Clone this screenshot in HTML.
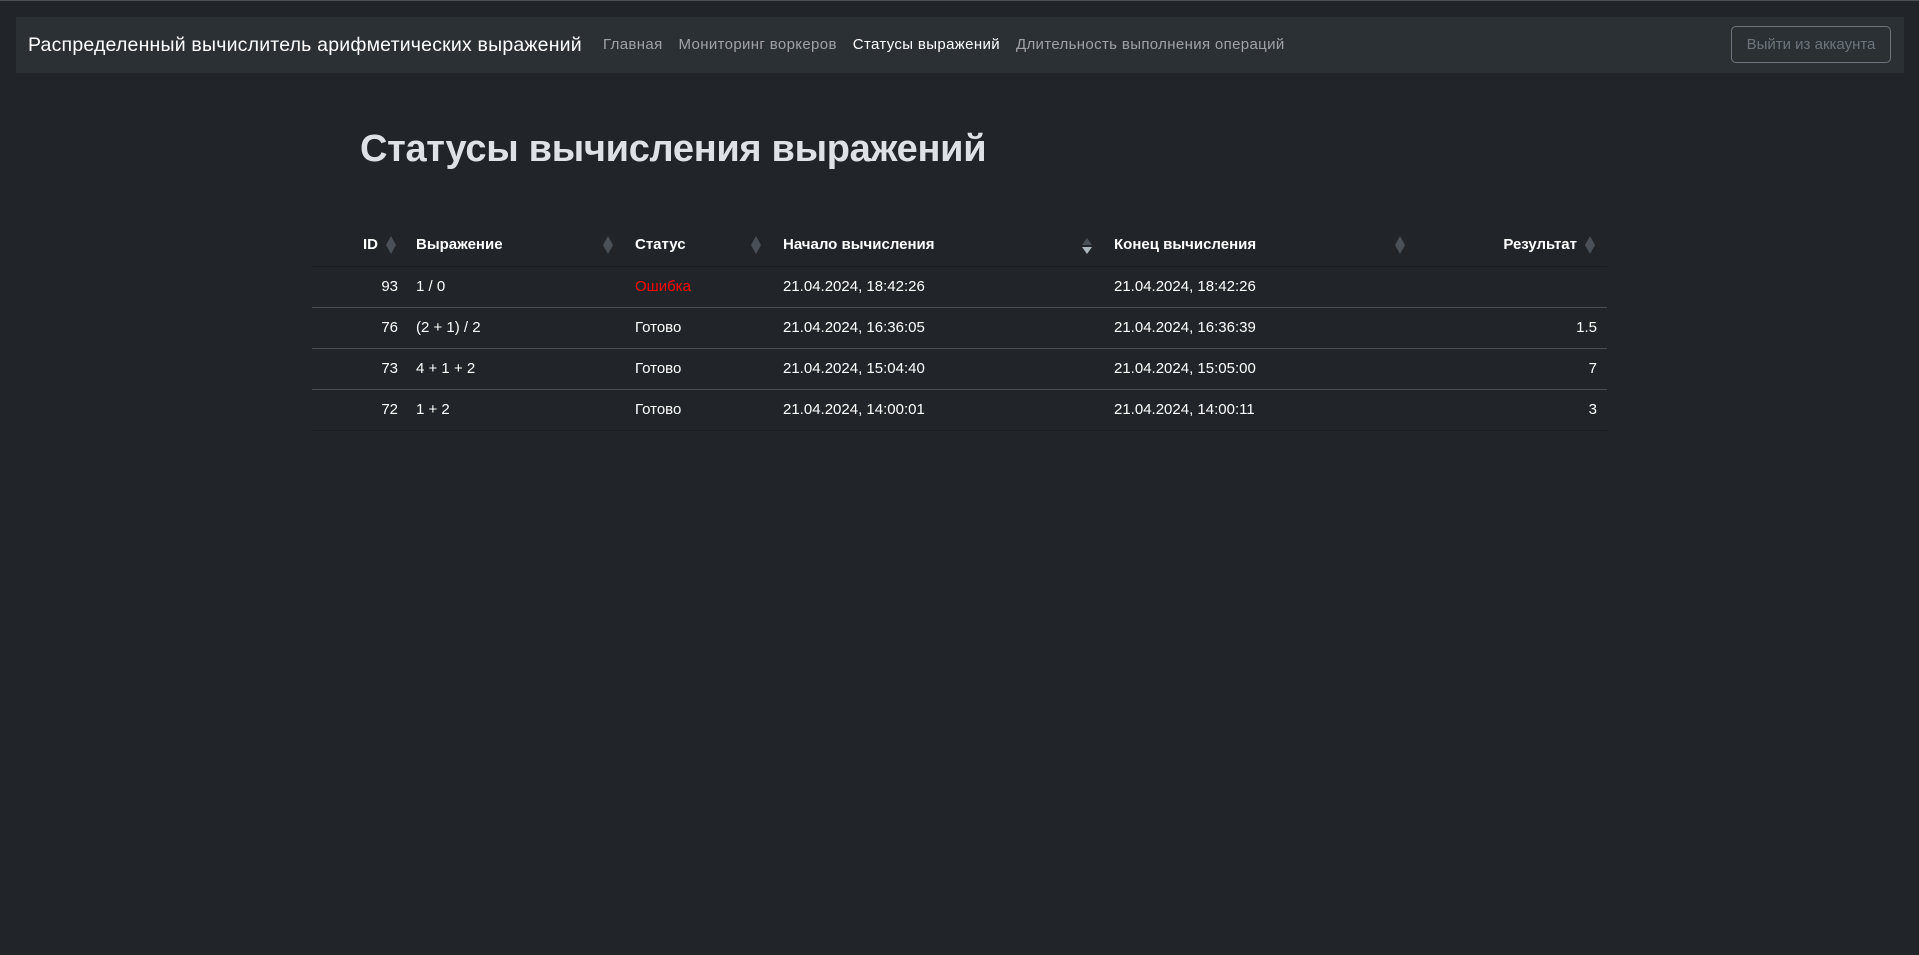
<!DOCTYPE html>
<html><head><meta charset="utf-8"><style>
*{box-sizing:border-box;margin:0;padding:0}
html,body{width:1919px;height:955px;background:#212529;color:#dee2e6;font-family:"Liberation Sans",sans-serif;overflow:hidden}
.topline{position:absolute;left:0;top:0;width:1919px;height:1px;background:#495057}
nav{position:absolute;left:16px;top:17px;width:1888px;height:56px;background:#2b3035}
.brand{position:absolute;left:12px;top:17px;font-size:19.5px;color:#fff;white-space:nowrap;letter-spacing:0.2px}
.links{position:absolute;left:587px;top:19px;font-size:15px;white-space:nowrap;letter-spacing:0.35px}
.links span{color:rgba(255,255,255,.55);margin-right:16px}
.links span.a{color:#fff}
.btn{position:absolute;left:1715px;top:9px;width:160px;height:37px;border:1px solid #6c757d;border-radius:5px;color:#6c757d;font-size:15px;text-align:center;line-height:35px}
h1{position:absolute;left:360px;top:128px;font-size:38px;font-weight:bold;color:#dee2e6;white-space:nowrap;letter-spacing:-0.3px}
table{position:absolute;left:312px;top:224px;width:1295px;border-collapse:collapse;font-size:15px;color:#fff}
th,td{padding:0 8px;position:relative;white-space:nowrap}
th{height:42px;font-weight:bold;text-align:left;border-bottom:1px solid #1a1d20}
td{height:41px;border-bottom:1px solid #495057}
tr:last-child td{border-bottom:1px solid #1a1d20}
td.r{text-align:right;padding-right:10px}
th.r{text-align:right;padding-right:30px}
.ic{position:absolute;right:14px;top:12px;width:10px;height:18px}
.ic:before{content:"";position:absolute;left:0;top:0;border-left:5px solid transparent;border-right:5px solid transparent;border-bottom:9px solid #495057}
.ic:after{content:"";position:absolute;left:0;top:9px;border-left:5px solid transparent;border-right:5px solid transparent;border-top:9px solid #495057}
.ic.d:after{border-top-color:#adb5bd;border-top-width:7px;top:11px}
.ic.d:before{border-bottom-width:7px;top:2px}
th.r .ic{right:12px}
.red{color:#f00}
</style></head><body>
<div class="topline"></div>
<nav>
<div class="brand">Распределенный вычислитель арифметических выражений</div>
<div class="links"><span>Главная</span><span>Мониторинг воркеров</span><span class="a">Статусы выражений</span><span>Длительность выполнения операций</span></div>
<div class="btn">Выйти из аккаунта</div>
</nav>
<h1>Статусы вычисления выражений</h1>
<table>
<colgroup><col style="width:96px"><col style="width:219px"><col style="width:148px"><col style="width:331px"><col style="width:313px"><col style="width:188px"></colgroup>
<tr><th class="r">ID<i class="ic"></i></th><th>Выражение<i class="ic"></i></th><th>Статус<i class="ic"></i></th><th>Начало вычисления<i class="ic d"></i></th><th>Конец вычисления<i class="ic"></i></th><th class="r">Результат<i class="ic"></i></th></tr>
<tr><td class="r">93</td><td>1 / 0</td><td class="red">Ошибка</td><td>21.04.2024, 18:42:26</td><td>21.04.2024, 18:42:26</td><td class="r"></td></tr>
<tr><td class="r">76</td><td>(2 + 1) / 2</td><td>Готово</td><td>21.04.2024, 16:36:05</td><td>21.04.2024, 16:36:39</td><td class="r">1.5</td></tr>
<tr><td class="r">73</td><td>4 + 1 + 2</td><td>Готово</td><td>21.04.2024, 15:04:40</td><td>21.04.2024, 15:05:00</td><td class="r">7</td></tr>
<tr><td class="r">72</td><td>1 + 2</td><td>Готово</td><td>21.04.2024, 14:00:01</td><td>21.04.2024, 14:00:11</td><td class="r">3</td></tr>
</table>
</body></html>
